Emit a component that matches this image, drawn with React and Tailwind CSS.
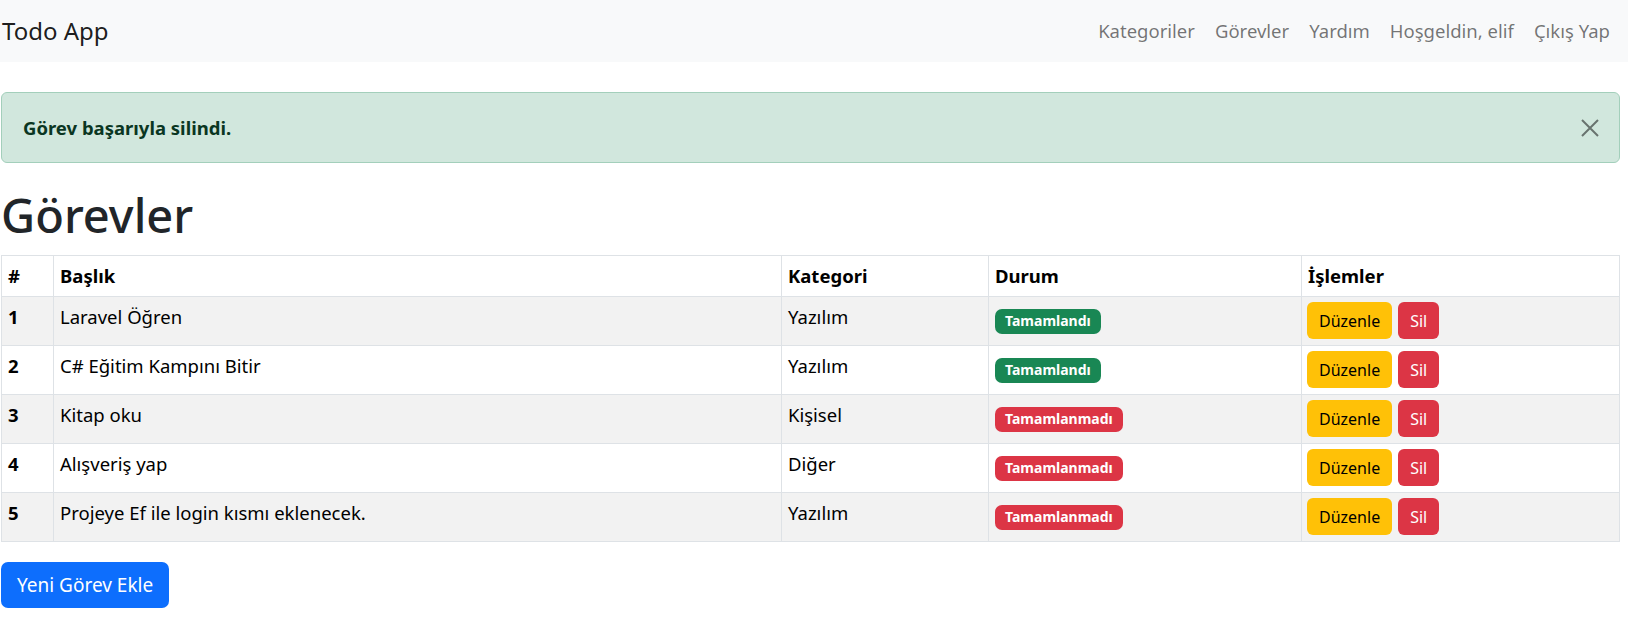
import React from "react";

const rows = [
  { id: 1, title: "Laravel Öğren", cat: "Yazılım", done: true },
  { id: 2, title: "C# Eğitim Kampını Bitir", cat: "Yazılım", done: true },
  { id: 3, title: "Kitap oku", cat: "Kişisel", done: false },
  { id: 4, title: "Alışveriş yap", cat: "Diğer", done: false },
  { id: 5, title: "Projeye Ef ile login kısmı eklenecek.", cat: "Yazılım", done: false },
];

export default function App() {
  return (
    <div className="min-h-[620px] bg-white text-[18.5px] text-[#212529]" style={{ fontFamily: '"Noto Sans", sans-serif' }}>
      <nav className="h-[62px] bg-[#f8f9fa] flex items-center justify-between pl-[2px] pr-[18px]">
        <span className="text-[24px] text-black/90">Todo App</span>
        <div className="flex items-center gap-[20px] text-[18.5px] text-black/55">
          <span>Kategoriler</span>
          <span>Görevler</span>
          <span>Yardım</span>
          <span>Hoşgeldin, elif</span>
          <span>Çıkış Yap</span>
        </div>
      </nav>

      <div className="pl-[1px] pr-[8px]">
        <div className="mt-[30px] h-[71px] flex items-center justify-between rounded-[6px] border border-[#a3cfbb] bg-[#d1e7dd] pl-[21px] pr-[19px]">
          <span className="font-bold text-[#0a3622]">Görev başarıyla silindi.</span>
          <svg width="20" height="20" viewBox="0 0 20 20" className="mt-[1px]">
            <path d="M2 2 L18 18 M18 2 L2 18" stroke="#000" strokeOpacity="0.5" strokeWidth="2" />
          </svg>
        </div>

        <h1 className="mt-[24px] mb-[12px] text-[47px] leading-[1.2] font-medium text-[#212529]">Görevler</h1>

        <table className="w-full border-collapse text-black leading-[24px]">
          <colgroup>
            <col className="w-[52px]" />
            <col className="w-[728px]" />
            <col className="w-[207px]" />
            <col className="w-[313px]" />
            <col />
          </colgroup>
          <thead>
            <tr className="h-[41px]">
              {["#", "Başlık", "Kategori", "Durum", "İşlemler"].map((h) => (
                <th key={h} className="border border-[#dee2e6] px-[6px] text-left font-bold align-middle">
                  {h}
                </th>
              ))}
            </tr>
          </thead>
          <tbody>
            {rows.map((r, i) => (
              <tr key={r.id} className={i % 2 === 0 ? "bg-[#f2f2f2]" : "bg-white"}>
                <td className="border border-[#dee2e6] px-[6px] pt-[8px] align-top font-bold h-[49px]">{r.id}</td>
                <td className="border border-[#dee2e6] px-[6px] pt-[8px] align-top">{r.title}</td>
                <td className="border border-[#dee2e6] px-[6px] pt-[8px] align-top">{r.cat}</td>
                <td className="border border-[#dee2e6] px-[6px] pt-[10px] align-top">
                  <span
                    className={
                      "inline-flex h-[25px] items-center rounded-[7px] px-[10px] text-[14px] font-bold text-white " +
                      (r.done ? "bg-[#198754]" : "bg-[#dc3545]")
                    }
                  >
                    {r.done ? "Tamamlandı" : "Tamamlanmadı"}
                  </span>
                </td>
                <td className="border border-[#dee2e6] px-[5px] pt-[5px] pb-[6px] align-top">
                  <div className="flex gap-[6px]">
                    <button className="h-[37px] rounded-[6px] bg-[#ffc107] px-[12px] text-[16px] text-black">Düzenle</button>
                    <button className="h-[37px] rounded-[6px] bg-[#dc3545] px-[12px] text-[16px] text-white">Sil</button>
                  </div>
                </td>
              </tr>
            ))}
          </tbody>
        </table>

        <button className="mt-[20px] h-[46px] rounded-[7px] bg-[#0d6efd] px-[16px] text-[19px] text-white">Yeni Görev Ekle</button>
      </div>
    </div>
  );
}
